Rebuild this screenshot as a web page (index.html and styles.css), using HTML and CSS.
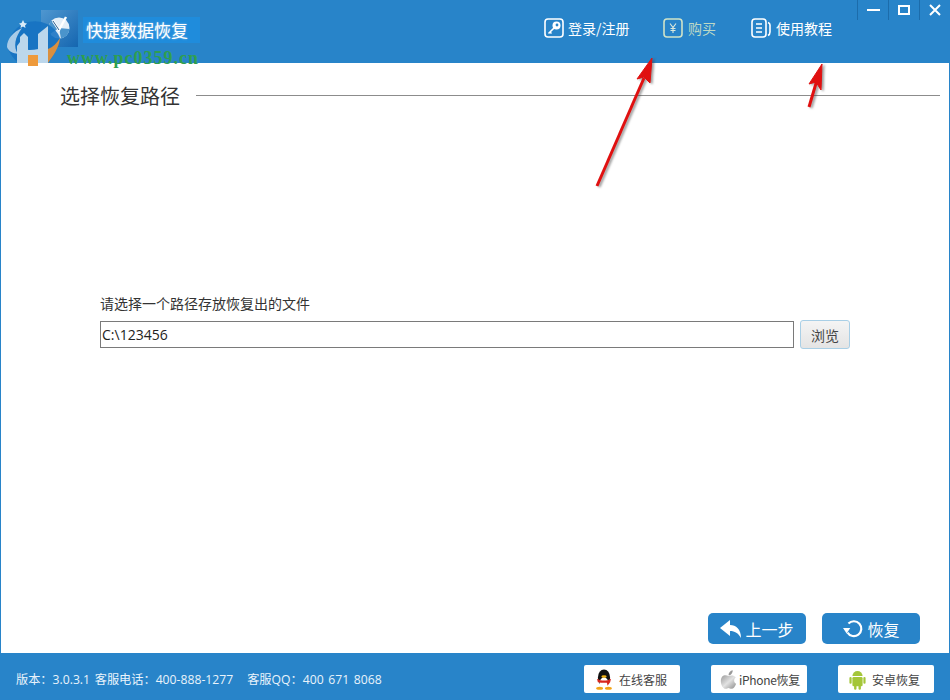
FILE: index.html
```html
<!DOCTYPE html>
<html lang="zh-CN">
<head>
  <meta charset="UTF-8">
  <title>快捷数据恢复</title>
  <link rel="stylesheet" href="styles.css">
</head>
<body>
  <div class="app">
    <header class="top-bar">
      <div class="brand">
        <svg class="app-icon" viewBox="0 0 37 37">
          <defs>
            <linearGradient id="iconBg" x1="0" y1="0" x2="1" y2="1">
              <stop offset="0" stop-color="#4f97d0"/>
              <stop offset="1" stop-color="#1566b0"/>
            </linearGradient>
          </defs>
          <rect width="37" height="37" fill="url(#iconBg)"/>
          <circle cx="18" cy="18" r="10.500" fill="#e4eff8"/>
          <path d="M18 18L10.500 10.500A10.500 10.500 0 0 0 9 24Z" fill="#4a94cc"/>
          <path d="M18 18L28.500 19A10.500 10.500 0 0 1 20 28.500Z" fill="#4a94cc"/>
          <path d="M12 11L18 20L25 7" fill="none" stroke="#fff" stroke-width="2.400"/>
          <path d="M12 11L18 20" fill="none" stroke="#2a5f8f" stroke-width="1"/>
        </svg>
        <div class="app-title">快捷数据恢复</div>
      </div>
      <nav class="top-nav">
        <a class="nav-item nav-login">
          <svg class="nav-icon" viewBox="0 0 20 20">
            <rect x="1" y="1" width="18" height="18" rx="3" fill="none" stroke="#fff" stroke-width="1.6"/>
            <circle cx="12.500" cy="7.500" r="4" fill="#fff"/>
            <circle cx="13" cy="7" r="1.400" fill="#2884c9"/>
            <path d="M10 10L4.500 15.500M6 14L7.500 15.500" fill="none" stroke="#fff" stroke-width="1.6"/>
          </svg>
          登录/注册
        </a>
        <a class="nav-item nav-buy">
          <svg class="nav-icon" viewBox="0 0 20 20">
            <rect x="1" y="1" width="18" height="18" rx="3" fill="none" stroke="#cfe3c8" stroke-width="1.6"/>
            <path d="M7 5.500L10 9.500L13 5.500M10 9.500V15M7.500 10.500H12.500M7.500 12.500H12.500" fill="none" stroke="#dbe9dc" stroke-width="1.1"/>
          </svg>
          购买
        </a>
        <a class="nav-item nav-help">
          <svg class="nav-icon" viewBox="0 0 20 20">
            <rect x="1" y="1" width="14" height="18" rx="3" fill="none" stroke="#fff" stroke-width="1.6"/>
            <path d="M5 6H11M5 10H11M5 14H11" stroke="#fff" stroke-width="1.4"/>
            <path d="M17 4.500C18.500 5 19 6 19 7V14C19 16 18 17 17 17.500" fill="none" stroke="#fff" stroke-width="1.6"/>
          </svg>
          使用教程
        </a>
      </nav>
      <div class="win-controls">
        <button class="win-btn"><span class="win-min"></span></button>
        <button class="win-btn"><span class="win-max"></span></button>
        <button class="win-btn">
          <svg class="win-close" viewBox="0 0 12 12"><path d="M1 1L11 11M11 1L1 11" stroke="#fff" stroke-width="2"/></svg>
        </button>
      </div>
    </header>

    <main class="content">
      <div class="section-head">
        <h1>选择恢复路径</h1>
        <div class="section-line"></div>
      </div>

      <div class="path-form">
        <label class="path-label">请选择一个路径存放恢复出的文件</label>
        <div class="path-row">
          <div class="path-input">C:\123456</div>
          <button class="browse-btn">浏览</button>
        </div>
      </div>

      <div class="actions">
        <button class="action-btn">
          <svg class="action-icon" viewBox="0 0 22 20"><path d="M0 9L10 1V6C16 6 21 10 21 19C18 14 15 12 10 12V17Z" fill="#fff"/></svg>
          上一步
        </button>
        <button class="action-btn">
          <svg class="action-icon" viewBox="0 0 22 22"><path d="M6 5A8.200 8.200 0 1 1 5 15" fill="none" stroke="#fff" stroke-width="2.400"/><path d="M0 10H8L4 16Z" fill="#fff"/></svg>
          恢复
        </button>
      </div>
    </main>

    <footer class="bottom-bar">
      <div class="version">版本：3.0.3.1 客服电话：400-888-1277 &nbsp; 客服QQ：400 671 8068</div>
      <div class="links">
        <button class="link-btn">
          <svg class="link-icon" viewBox="0 0 20 24">
            <ellipse cx="10" cy="10" rx="7" ry="9.500" fill="#111"/>
            <ellipse cx="10" cy="16" rx="5" ry="6.500" fill="#fff"/>
            <path d="M2 11C7 14 13 14 18 11L17 15C12 16 8 16 3 15Z" fill="#d8261c"/>
            <path d="M13 14L14 19L17 15Z" fill="#d8261c"/>
            <ellipse cx="10" cy="8.500" rx="3" ry="1.400" fill="#f3b416"/>
            <ellipse cx="5" cy="22" rx="4" ry="1.800" fill="#f3a416"/>
            <ellipse cx="15" cy="22" rx="4" ry="1.800" fill="#f3a416"/>
          </svg>
          在线客服
        </button>
        <button class="link-btn link-iphone">
          <svg class="link-icon apple" viewBox="0 0 20 24">
            <defs>
              <linearGradient id="appleFill" x1="0" y1="0" x2="1" y2="1">
                <stop offset="0" stop-color="#9a9a9a"/>
                <stop offset="0.500" stop-color="#e2e2e2"/>
                <stop offset="1" stop-color="#8a8a8a"/>
              </linearGradient>
            </defs>
            <path d="M10 8C7 6 1 6 1 14C1 19 4 23 6.500 23C8 23 9 22 10 22C11 22 12 23 13.500 23C16 23 18 20 19 17C16 15.500 16 11 18.500 9.500C16.500 6.500 12.500 7 10 8Z" fill="url(#appleFill)"/>
            <path d="M10 7C10 4 12 1.500 15 1C15 4 13 7 10 7Z" fill="#999"/>
          </svg>
          iPhone恢复
        </button>
        <button class="link-btn">
          <svg class="link-icon android" viewBox="0 0 20 24">
            <rect x="4" y="9" width="12" height="11" rx="1.500" fill="#a4c639"/>
            <path d="M4 8A6 6 0 0 1 16 8Z" fill="#a4c639"/>
            <rect x="0.500" y="9" width="2.600" height="8" rx="1.300" fill="#a4c639"/>
            <rect x="16.900" y="9" width="2.600" height="8" rx="1.300" fill="#a4c639"/>
            <rect x="6" y="18" width="2.800" height="6" rx="1.400" fill="#a4c639"/>
            <rect x="11.200" y="18" width="2.800" height="6" rx="1.400" fill="#a4c639"/>
          </svg>
          安卓恢复
        </button>
      </div>
    </footer>

    <!-- Watermark and arrows drawn over the window -->
    <svg class="watermark-logo" viewBox="0 0 70 70">
      <path d="M8 49A27 27 0 0 1 60 38C59 47 54 55 48 63H18C14 59 10 54 8 49Z" fill="#1672c2" opacity="0.88"/>
      <path d="M22 28C13 32 7 39 7 47C9 52 13 53 18 54C13 47 15 37 22 28Z" fill="#a9cbe7"/>
      <path d="M17 46L20 42V37L24 33L28 37V63H17Z" fill="#bcd7ec"/>
      <path d="M38 34L43 30L48 26V63H38Z" fill="#bcd7ec"/>
      <path d="M17 47C24 51 36 51 48 46V54C36 57 26 57 17 54Z" fill="#bcd7ec"/>
      <path d="M60 38C59 48 53 56 48 63V49C53 47 57 43 60 38Z" fill="#d98f3e"/>
      <path d="M28 55H38V66H28Z" fill="#ee9a3c"/>
      <path d="M23 20L24.500 23L27 23.500L25 25.500L25.500 28L23 26.500L20.500 28L21 25.500L19 23.500L21.500 23Z" fill="#d9ebf8"/>
    </svg>
    <div class="watermark-text">www.pc0359.cn</div>
    <svg class="arrows" viewBox="0 0 950 700">
      <g fill="#e01010" stroke="#e01010">
        <path d="M597 186L644 78" stroke-width="3" fill="none"/>
        <path d="M652 58L637 79L644 77L650 83Z"/>
        <path d="M809 107L817 80" stroke-width="3" fill="none"/>
        <path d="M822 64L809 84L816 82L821 90Z"/>
      </g>
    </svg>
  </div>
</body>
</html>
```

FILE: styles.css
```css
* {
  margin: 0;
  padding: 0;
  box-sizing: border-box;
}

body {
  font-family: "Noto Sans CJK SC", "Open Sans", sans-serif;
  background: #ffffff;
  color: #333;
  overflow: hidden;
}

.app {
  position: relative;
  width: 950px;
  height: 700px;
  display: flex;
  flex-direction: column;
  background: #2884c9;
}

/* Top bar */
.top-bar {
  height: 63px;
  flex-shrink: 0;
  display: flex;
  background: #2884c9;
  color: #fff;
}

.brand {
  width: 544px;
  display: flex;
  align-items: flex-start;
  padding: 10px 0 0 41px;
}

.app-icon {
  width: 37px;
  height: 37px;
}

.app-title {
  width: 117px;
  height: 26px;
  margin: 7px 0 0 5px;
  padding-left: 3px;
  background: #1f8cdc;
  font-size: 17px;
  line-height: 26px;
  color: #fff;
  text-shadow: 0 0 2px #9fc8e8;
}

.top-nav {
  display: flex;
  height: 56px;
  align-items: center;
}

.nav-item {
  display: flex;
  align-items: center;
  gap: 5px;
  font-size: 14px;
  color: #fff;
}

.nav-login {
  width: 119px;
  gap: 4px;
}

.nav-buy {
  width: 88px;
  color: #bcd8c6;
}

.nav-help {
  width: 106px;
}

.nav-icon {
  width: 20px;
  height: 20px;
}

.win-controls {
  display: flex;
  margin-left: auto;
  height: 20px;
}

.win-btn {
  width: 31px;
  height: 20px;
  border: none;
  border-left: 1px solid #1c6cab;
  background: none;
  display: flex;
  align-items: center;
  justify-content: center;
}

.win-min {
  width: 13px;
  height: 2px;
  background: #fff;
}

.win-max {
  width: 12px;
  height: 10px;
  border: 2px solid #fff;
}

.win-close {
  width: 12px;
  height: 12px;
}

/* Middle part */
.content {
  flex: 1;
  margin: 0 1px;
  background: #fff;
  display: flex;
  flex-direction: column;
}

.section-head {
  display: flex;
  align-items: center;
  gap: 16px;
  padding: 18px 9px 0 59px;
  height: 47px;
}

.section-head h1 {
  font-size: 20px;
  font-weight: 400;
  line-height: 30px;
  color: #333;
}

.section-line {
  flex: 1;
  height: 1px;
  background: #8c8c8c;
}

.path-form {
  margin: 183px 0 0 99px;
  width: 750px;
}

.path-label {
  display: block;
  font-size: 14px;
  line-height: 20px;
  color: #333;
}

.path-row {
  display: flex;
  align-items: center;
  gap: 6px;
  margin-top: 7px;
}

.path-input {
  flex: 1;
  height: 27px;
  border: 1px solid #7a7a7a;
  padding-left: 1px;
  font-family: "Open Sans", sans-serif;
  font-size: 14px;
  line-height: 26px;
  color: #222;
}

.browse-btn {
  width: 50px;
  height: 29px;
  border: 1px solid #a9cfe6;
  border-radius: 3px;
  background: linear-gradient(#f4f4f4, #e4e4e4);
  font-family: inherit;
  font-size: 14px;
  color: #444;
}

.actions {
  margin-top: auto;
  display: flex;
  justify-content: flex-end;
  gap: 16px;
  padding: 0 29px 9px 0;
}

.action-btn {
  width: 98px;
  height: 31px;
  border: none;
  border-radius: 5px;
  background: #2884c9;
  color: #fff;
  font-family: inherit;
  font-size: 16px;
  display: flex;
  align-items: center;
  justify-content: center;
  gap: 3px;
}

.action-icon {
  width: 22px;
  height: 20px;
}

/* Bottom bar */
.bottom-bar {
  height: 47px;
  flex-shrink: 0;
  display: flex;
  align-items: center;
  justify-content: space-between;
  padding: 5px 16px 0;
  background: #2884c9;
}

.version {
  font-family: "Open Sans", "Noto Sans CJK TC", sans-serif;
  font-size: 12.2px;
  word-spacing: 1.5px;
  color: #e8f3fb;
}

.links {
  display: flex;
  gap: 31px;
}

.link-btn {
  width: 96px;
  height: 28px;
  padding-left: 11px;
  border: none;
  border-radius: 2px;
  background: #fff;
  font-family: inherit;
  font-size: 12px;
  color: #444;
  display: flex;
  align-items: center;
  gap: 6px;
}

.link-iphone {
  padding-left: 9px;
  gap: 2px;
  letter-spacing: -0.3px;
}

.link-icon {
  width: 18px;
  height: 21px;
  flex-shrink: 0;
}

.link-icon.apple {
  width: 17px;
}

.link-icon.android {
  width: 17px;
}

/* Overlays */
.watermark-logo {
  position: absolute;
  left: 0;
  top: 0;
  width: 70px;
  height: 70px;
}

.watermark-text {
  position: absolute;
  left: 67px;
  top: 48px;
  font-family: "Liberation Serif", serif;
  font-size: 18px;
  font-weight: 700;
  letter-spacing: 1px;
  line-height: 20px;
  color: #2f9f4f;
}

.arrows {
  position: absolute;
  left: 0;
  top: 0;
  width: 950px;
  height: 700px;
  pointer-events: none;
  filter: drop-shadow(2px 1px 1px rgba(60, 60, 60, 0.5));
}
```
